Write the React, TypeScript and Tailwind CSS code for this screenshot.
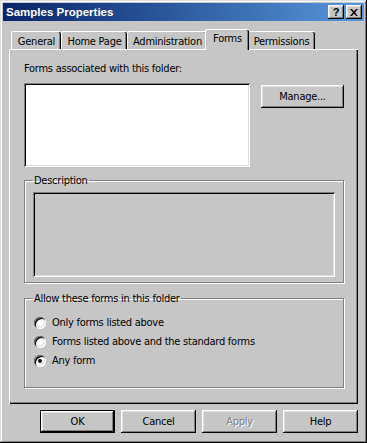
import React from 'react';

const raised =
  'shadow-[inset_-1px_-1px_0_#000,inset_1px_1px_0_#fff,inset_-2px_-2px_0_#808080,inset_2px_2px_0_#dfdfdf]';
const sunken =
  'shadow-[inset_1px_1px_0_#808080,inset_-1px_-1px_0_#fff,inset_2px_2px_0_#000,inset_-2px_-2px_0_#dfdfdf]';

function Tab({ label, width, active }: { label: string; width: string; active?: boolean }) {
  if (active) {
    return (
      <div
        className={`relative z-10 -mx-[2px] -mb-[1px] flex h-[21px] justify-center pt-[2px] bg-[#c6c6c6] border-l border-t border-white rounded-tl-[2px] rounded-tr-[2px] shadow-[inset_-1px_0_0_#000,inset_-2px_0_0_#808080] ${width}`}
      >
        {label}
      </div>
    );
  }
  return (
    <div
      className={`flex h-[18px] justify-center pt-[3px] border-l border-t border-white rounded-tl-[2px] rounded-tr-[2px] shadow-[inset_-1px_0_0_#000,inset_-2px_0_0_#808080] ${width}`}
    >
      {label}
    </div>
  );
}

function Radio({ label, checked }: { label: string; checked?: boolean }) {
  return (
    <div className="flex h-[19px] items-center gap-[6px]">
      <div className={`flex h-[12px] w-[12px] items-center justify-center rounded-full bg-white ${sunken}`}>
        {checked && <div className="h-[4px] w-[4px] rounded-full bg-black" />}
      </div>
      <span>{label}</span>
    </div>
  );
}

function Button({ label, primary, disabled }: { label: string; primary?: boolean; disabled?: boolean }) {
  return (
    <div
      className={`flex h-[23px] w-[75px] items-center justify-center ${primary ? 'border border-black' : ''} ${raised} ${
        disabled ? 'text-[#808080] [text-shadow:1px_1px_0_#fff]' : ''
      }`}
    >
      {label}
    </div>
  );
}

export default function App() {
  return (
    <div className="h-[443px] w-[367px] bg-[#c6c6c6] px-[3px] pt-[3px] text-[11px] leading-[13px] tracking-[-0.25px] text-black [font-family:'DejaVu_Sans_Condensed','DejaVu_Sans',sans-serif] shadow-[inset_-1px_-1px_0_#000,inset_1px_1px_0_#dfdfdf,inset_-2px_-2px_0_#808080,inset_2px_2px_0_#fff]">
      {/* title bar */}
      <div className="flex h-[18px] items-center justify-between bg-gradient-to-r from-[#0a246a] to-[#5a98dc] pl-[3px] pr-[2px]">
        <span className="font-bold text-white text-[11.5px] tracking-normal [font-family:'Liberation_Sans',Arial,sans-serif]">
          Samples Properties
        </span>
        <div className="flex gap-[2px]">
          <div
            className={`flex h-[14px] w-[16px] items-center justify-center bg-[#c6c6c6] font-bold text-[11px] leading-none tracking-normal [font-family:'Liberation_Sans',Arial,sans-serif] ${raised}`}
          >
            ?
          </div>
          <div className={`flex h-[14px] w-[16px] items-center justify-center bg-[#c6c6c6] ${raised}`}>
            <svg width="8" height="7" viewBox="0 0 8 7">
              <path d="M0 0h2l2 2.5L6 0h2L5 3.5 8 7H6L4 4.5 2 7H0l3-3.5z" fill="#000" />
            </svg>
          </div>
        </div>
      </div>

      <div className="px-[6px]">
        {/* tabs */}
        <div className="mt-[8px] flex h-[20px] items-end pl-[2px]">
          <Tab label="General" width="w-[50px]" />
          <Tab label="Home Page" width="w-[66px]" />
          <Tab label="Administration" width="w-[80px]" />
          <Tab label="Forms" width="w-[44px]" active />
          <Tab label="Permissions" width="w-[68px]" />
        </div>

        {/* panel */}
        <div className="h-[355px] border-l border-t border-white px-[14px] pt-[12px] shadow-[inset_-1px_-1px_0_#000,inset_-2px_-2px_0_#808080]">
          <div>Forms associated with this folder:</div>
          <div className="mt-[8px] flex items-start gap-[11px]">
            <div className={`h-[84px] w-[226px] bg-white ${sunken}`} />
            <div className={`mt-[2px] flex h-[23px] w-[83px] items-center justify-center ${raised}`}>Manage...</div>
          </div>

          <fieldset className="mt-[7px] w-[320px] border border-[#808080] px-[8px] pb-[5px] shadow-[inset_1px_1px_0_#fff,1px_1px_0_#fff]">
            <legend className="px-[1px]">Description</legend>
            <div className={`mt-[5px] h-[85px] w-[302px] ${sunken}`} />
          </fieldset>

          <fieldset className="mt-[9px] w-[320px] border border-[#808080] pl-[9px] pb-[17px] shadow-[inset_1px_1px_0_#fff,1px_1px_0_#fff]">
            <legend className="ml-[-1px] px-[1px]">Allow these forms in this folder</legend>
            <div className="mt-[8px]">
              <Radio label="Only forms listed above" />
              <Radio label="Forms listed above and the standard forms" />
              <Radio label="Any form" checked />
            </div>
          </fieldset>
        </div>

        {/* buttons */}
        <div className="mt-[6px] flex justify-end gap-[6px]">
          <Button label="OK" primary />
          <Button label="Cancel" />
          <Button label="Apply" disabled />
          <Button label="Help" />
        </div>
      </div>
    </div>
  );
}
